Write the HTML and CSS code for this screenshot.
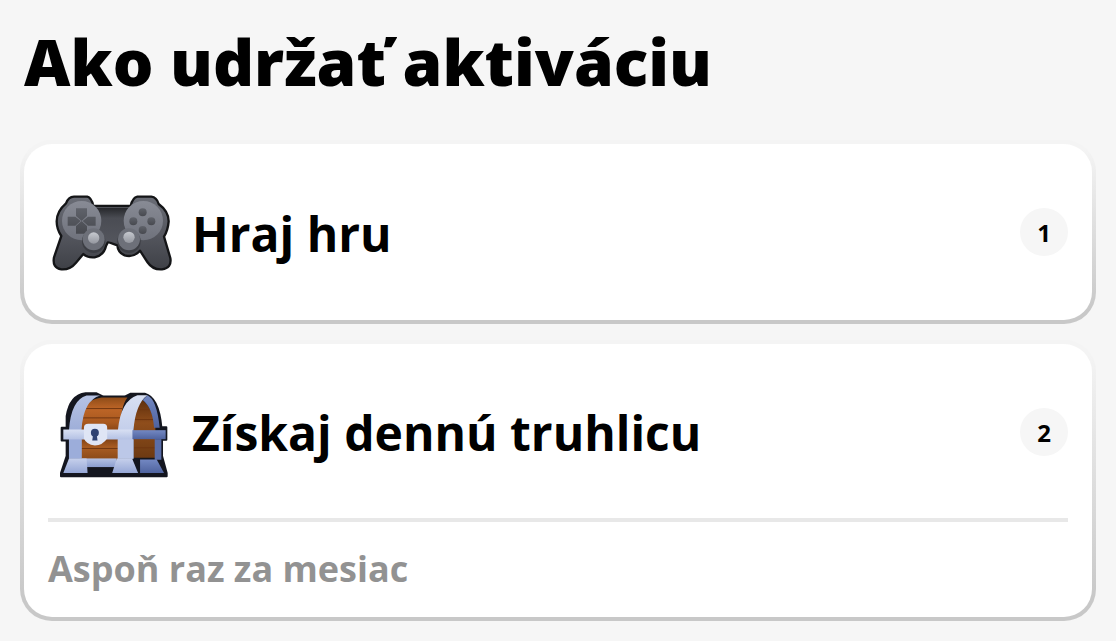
FILE: index.html
```html
<!DOCTYPE html>
<html lang="sk">
<head>
    <meta charset="UTF-8">
    <meta name="viewport" content="width=device-width, initial-scale=1.0">
    <title>Ako udržať aktiváciu</title>
    <link rel="stylesheet" href="styles.css">
</head>
<body>
    <h1 class="title">Ako udržať aktiváciu</h1>

    <div class="card">
        <div class="step">
            <svg class="step-icon pad-icon" viewBox="66 70 360 231" aria-hidden="true">
                <defs>
                    <linearGradient id="padBody" x1="0" y1="0" x2="0" y2="1">
                        <stop offset="0" stop-color="#6a6d76"/>
                        <stop offset="0.5" stop-color="#55575f"/>
                        <stop offset="1" stop-color="#3f4147"/>
                    </linearGradient>
                    <linearGradient id="padBridge" x1="0" y1="0" x2="0" y2="1">
                        <stop offset="0" stop-color="#27282c"/>
                        <stop offset="0.3" stop-color="#4a4c53"/>
                        <stop offset="1" stop-color="#53555d"/>
                    </linearGradient>
                    <linearGradient id="padCircle" x1="0" y1="0" x2="0" y2="1">
                        <stop offset="0" stop-color="#888b95"/>
                        <stop offset="1" stop-color="#6f727c"/>
                    </linearGradient>
                    <linearGradient id="padKey" x1="0" y1="0" x2="0" y2="1">
                        <stop offset="0" stop-color="#5f626a"/>
                        <stop offset="1" stop-color="#47494f"/>
                    </linearGradient>
                    <linearGradient id="padStick" x1="0" y1="0" x2="0" y2="1">
                        <stop offset="0" stop-color="#c6c9cf"/>
                        <stop offset="1" stop-color="#94979f"/>
                    </linearGradient>
                </defs>
                <path d="M108 98 Q115 79 132 78 H172 Q184 80 190 106 H302 Q308 80 322 78 H364 Q380 80 386 100 Q416 122 416 152 Q414 178 402 198 L421 262 Q426 292 396 296 Q368 298 352 274 L330 240 Q310 262 284 254 Q264 246 262 224 L234 214 L228 226 Q222 254 194 260 Q172 262 160 250 L138 276 Q120 298 94 296 Q66 292 72 260 L94 196 Q80 176 80 152 Q80 122 108 98 Z" fill="url(#padBody)" stroke="#141517" stroke-width="7" stroke-linejoin="round"/>
                <rect x="196" y="112" width="98" height="100" fill="url(#padBridge)"/>
                <circle cx="155" cy="150" r="59" fill="url(#padCircle)"/>
                <circle cx="340" cy="150" r="59" fill="url(#padCircle)"/>
                <path d="M138 113 H171 V136 L155 151 L138 136 Z M138 189 H171 V166 L155 151 L138 166 Z M113 138 H136 L152 151 L136 165 H113 Z M197 138 H174 L158 151 L174 165 H197 Z" fill="url(#padKey)"/>
                <g fill="url(#padKey)">
                    <circle cx="338" cy="125" r="12"/>
                    <circle cx="310" cy="152" r="12"/>
                    <circle cx="364" cy="152" r="12"/>
                    <circle cx="338" cy="178" r="12"/>
                </g>
                <circle cx="191" cy="212" r="35" fill="#3c3e44"/>
                <circle cx="297" cy="212" r="35" fill="#3c3e44"/>
                <circle cx="191" cy="206" r="33" fill="#6d7079"/>
                <circle cx="297" cy="206" r="33" fill="#6d7079"/>
                <circle cx="191" cy="202" r="17" fill="url(#padStick)"/>
                <circle cx="297" cy="200" r="17" fill="url(#padStick)"/>
            </svg>
            <span class="step-name">Hraj hru</span>
            <span class="step-num">1</span>
        </div>
    </div>

    <div class="card card-chest">
        <div class="step">
            <svg class="step-icon chest-icon" viewBox="55 50 325 260" aria-hidden="true">
                <defs>
                    <linearGradient id="wood" x1="0" y1="0" x2="0" y2="1">
                        <stop offset="0" stop-color="#8f4c18"/>
                        <stop offset="0.18" stop-color="#bd6527"/>
                        <stop offset="0.4" stop-color="#a9591f"/>
                        <stop offset="0.62" stop-color="#74390f"/>
                        <stop offset="0.8" stop-color="#a95c22"/>
                        <stop offset="1" stop-color="#8a4a18"/>
                    </linearGradient>
                    <linearGradient id="woodBack" x1="0" y1="0" x2="0" y2="1">
                        <stop offset="0" stop-color="#5f2f0d"/>
                        <stop offset="0.4" stop-color="#8f4d1b"/>
                        <stop offset="1" stop-color="#6d3a12"/>
                    </linearGradient>
                    <linearGradient id="steel" x1="0" y1="0" x2="0" y2="1">
                        <stop offset="0" stop-color="#b6c3e4"/>
                        <stop offset="1" stop-color="#8b9dcf"/>
                    </linearGradient>
                    <linearGradient id="steelLight" x1="0" y1="0" x2="0" y2="1">
                        <stop offset="0" stop-color="#d8e0f3"/>
                        <stop offset="1" stop-color="#b4c1e4"/>
                    </linearGradient>
                    <linearGradient id="steelFoot" x1="0" y1="0" x2="0" y2="1">
                        <stop offset="0" stop-color="#c6d0ec"/>
                        <stop offset="1" stop-color="#96a7d6"/>
                    </linearGradient>
                    <linearGradient id="steelDark" x1="0" y1="0" x2="0" y2="1">
                        <stop offset="0" stop-color="#7388c2"/>
                        <stop offset="1" stop-color="#4f639f"/>
                    </linearGradient>
                </defs>
                <path d="M75 160 V125 Q85 62 132 56 H165 L185 66 H250 L268 57 H310 Q352 68 360 158 H375 V196 H362 V245 L376 296 V306 H58 V296 L75 245 V198 H60 V160 Z" fill="#14161f" stroke="#14161f" stroke-width="6" stroke-linejoin="round"/>
                <path d="M115 250 V125 Q125 78 180 69 H258 Q238 95 236 160 L232 256 H115 Z" fill="url(#wood)"/>
                <path d="M276 250 V160 Q280 95 304 76 Q334 100 342 160 V250 Z" fill="url(#woodBack)"/>
                <g stroke="#6f3610" stroke-width="3">
                    <path d="M122 102 H244"/>
                    <path d="M118 130 H240"/>
                    <path d="M116 222 H232"/>
                    <path d="M278 105 H330"/>
                    <path d="M278 135 H338"/>
                    <path d="M278 220 H342"/>
                </g>
                <path d="M82 168 Q88 76 135 63 H176 Q125 78 120 165 V252 H82 Z" fill="url(#steel)"/>
                <path d="M229 168 Q238 78 288 62 H318 Q282 88 276 168 V252 H229 Z" fill="url(#steelLight)"/>
                <path d="M318 62 Q346 74 355 160 H338 Q334 100 304 76 Z" fill="url(#steelDark)"/>
                <rect x="82" y="195" width="38" height="58" fill="#9cadda"/>
                <rect x="229" y="195" width="47" height="58" fill="#bcc8e8"/>
                <rect x="340" y="194" width="20" height="62" fill="#5a6ea9"/>
                <rect x="65" y="165" width="208" height="30" fill="url(#steelLight)"/>
                <rect x="273" y="167" width="100" height="27" fill="url(#steelDark)"/>
                <rect x="120" y="252" width="105" height="26" fill="url(#steel)"/>
                <path d="M82 252 H135 L138 296 H65 Z" fill="url(#steelFoot)"/>
                <path d="M226 252 H272 L290 296 H212 Z" fill="url(#steelFoot)"/>
                <path d="M296 255 H346 L368 296 H296 Z" fill="url(#steelDark)"/>
                <path d="M127 160 Q127 148 140 148 H185 Q197 148 197 160 V192 Q184 212 160 213 Q134 210 127 192 Z" fill="#dfe5f5"/>
                <circle cx="160" cy="175" r="12" fill="#2f4272"/>
                <path d="M155 178 H165 L168 198 H152 Z" fill="#2f4272"/>
            </svg>
            <span class="step-name">Získaj dennú truhlicu</span>
            <span class="step-num">2</span>
        </div>
        <div class="card-note">Aspoň raz za mesiac</div>
    </div>
</body>
</html>
```

FILE: styles.css
```css
html, body {
    margin: 0;
    height: 641px;
    overflow: hidden;
}
body {
    font-family: "Open Sans", sans-serif;
    background-color: #f6f6f6;
    color: #000;
    padding: 0 20px;
    box-sizing: border-box;
}
.title {
    margin: 0;
    height: 140px;
    padding: 18px 0 0 4px;
    box-sizing: border-box;
    font-size: 64px;
    line-height: 87px;
    font-weight: 800;
}
.card {
    height: 184px;
    margin-bottom: 16px;
    padding: 4px 24px 0;
    box-sizing: border-box;
    border: 4px solid transparent;
    border-radius: 32px;
    background: linear-gradient(#fff, #fff) padding-box,
                linear-gradient(#f4f4f4 5%, #c8c8c8 92%) border-box;
}
.card-chest {
    height: 281px;
    margin-bottom: 0;
}
.step {
    display: flex;
    align-items: center;
    height: 172px;
}
.card-chest .step {
    height: 170px;
}
.step-icon {
    flex-shrink: 0;
}
.pad-icon {
    width: 120px;
    height: 77px;
    margin: 0 20px 4px 4px;
}
.chest-icon {
    width: 108px;
    height: 87px;
    margin: 2px 24px 0 12px;
}
.step-name {
    flex: 1;
    font-size: 48px;
    line-height: 65px;
    margin-top: -2px;
    font-weight: 700;
}
.step-num {
    width: 48px;
    height: 48px;
    margin-bottom: 4px;
    border-radius: 50%;
    background-color: #f6f6f6;
    display: flex;
    align-items: center;
    justify-content: center;
    font-size: 24px;
    font-weight: 700;
}
.card-chest .step-num {
    margin-bottom: 2px;
}
.card-note {
    border-top: 4px solid #e8e8e8;
    padding-top: 22px;
    font-size: 36px;
    line-height: 49px;
    font-weight: 700;
    color: #929292;
}
```
